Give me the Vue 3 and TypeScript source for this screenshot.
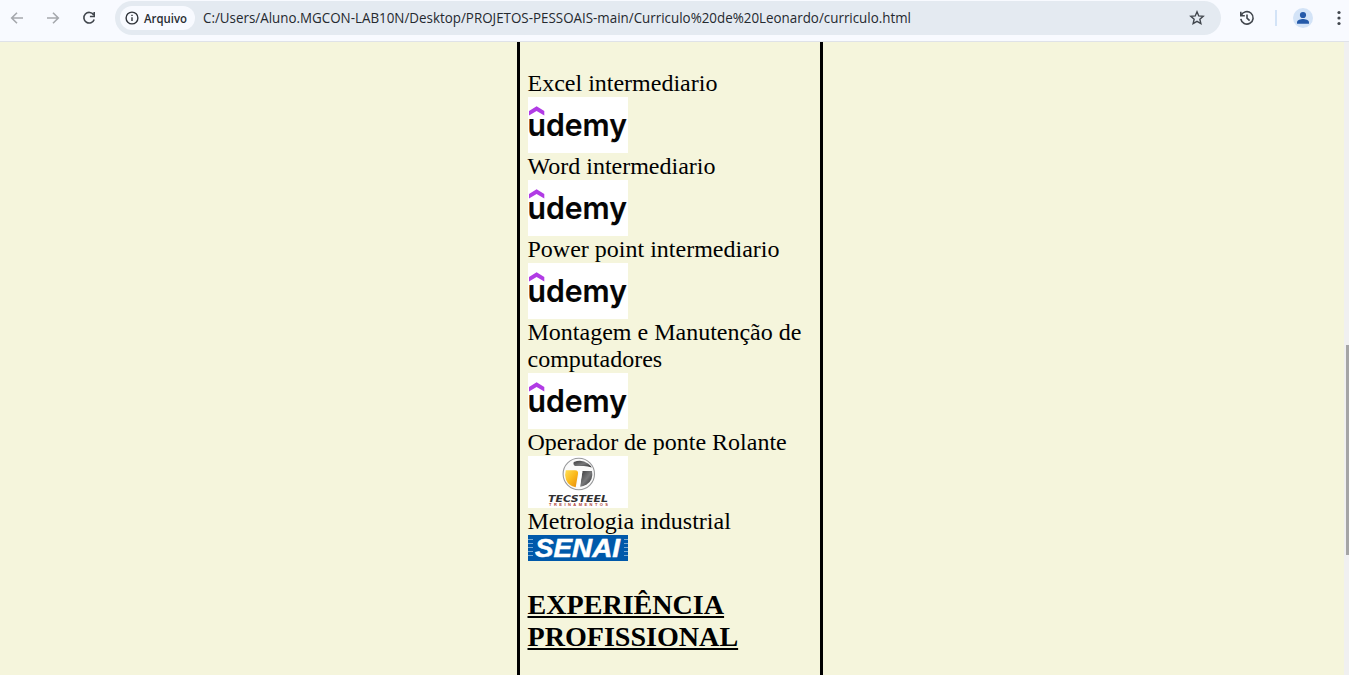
<script setup lang="ts">
type Logo = 'udemy' | 'tecsteel' | 'senai'
interface Course { name: string; logo: Logo }

const courses: Course[] = [
  { name: 'Excel intermediario', logo: 'udemy' },
  { name: 'Word intermediario', logo: 'udemy' },
  { name: 'Power point intermediario', logo: 'udemy' },
  { name: 'Montagem e Manutenção de computadores', logo: 'udemy' },
  { name: 'Operador de ponte Rolante', logo: 'tecsteel' },
  { name: 'Metrologia industrial', logo: 'senai' },
]
const address = 'C:/Users/Aluno.MGCON-LAB10N/Desktop/PROJETOS-PESSOAIS-main/Curriculo%20de%20Leonardo/curriculo.html'
</script>

<template>
  <div class="window">
    <header class="toolbar">
      <svg class="icon back" width="16" height="16" viewBox="0 0 16 16"><path d="M14 8H3M8 2.7 2.7 8 8 13.3" /></svg>
      <svg class="icon forward" width="16" height="16" viewBox="0 0 16 16"><path d="M2 8h11M8 2.7 13.3 8 8 13.3" /></svg>
      <svg class="icon reload" width="16" height="16" viewBox="0 0 16 16"><path d="M12.6 4.8A5.3 5.3 0 1 0 13.2 9.4M13.2 2v4.5H8.9" /></svg>
      <div class="omnibox">
        <div class="chip">
          <svg class="icon info" width="14" height="14" viewBox="0 0 14 14"><circle cx="7" cy="7" r="5.9" /><path d="M7 6.3v3.8M7 3.7v1.4" /></svg>
          <svg class="chip-label" width="46" height="24"><text x="0" y="16.5" textLength="43" lengthAdjust="spacingAndGlyphs">Arquivo</text></svg>
        </div>
        <svg class="address" width="712" height="28"><text x="0" y="19" textLength="708" lengthAdjust="spacingAndGlyphs">{{ address }}</text></svg>
        <svg class="icon star" width="16" height="16" viewBox="0 0 16 16"><path d="m8 1.8 1.75 4.1 4.45.4-3.35 2.95 1 4.35L8 11.3l-3.85 2.3 1-4.35L1.8 6.3l4.45-.4Z" /></svg>
      </div>
      <svg class="icon history" width="16" height="16" viewBox="0 0 16 16"><path d="M1.8 1.8v4h4M2.2 5.5A6.2 6.2 0 1 1 1.8 8.8M8 4.5V8.2l2.6 2.5" /></svg>
      <span class="divider" />
      <svg class="profile" width="20" height="20" viewBox="0 0 20 20"><circle cx="10" cy="10" r="10" fill="#d3e3f7" /><circle cx="10" cy="7" r="3.1" fill="#2459a9" /><path d="M4 15.8v-1.5c0-2.2 3.8-3.2 6-3.2s6 1 6 3.2v1.5Z" fill="#2459a9" /></svg>
      <svg class="menu" width="6" height="16" viewBox="0 0 6 16"><circle cx="3" cy="2.5" r="1.6" /><circle cx="3" cy="8" r="1.6" /><circle cx="3" cy="13.5" r="1.6" /></svg>
    </header>

    <div class="viewport">
      <main class="page">
        <section class="resume">
          <div v-for="course in courses" :key="course.name" class="course">
            <p>{{ course.name }}</p>
            <svg v-if="course.logo === 'udemy'" width="100" height="56" viewBox="0 0 100 56">
              <rect width="100" height="56" fill="#fff" />
              <path d="M1 14 8.6 9.2l7.7 4.8v4.5L8.6 13.9 1 18.5Z" fill="#b13be5" />
              <text class="udemy" x="-.5" y="39.4" textLength="99.5" lengthAdjust="spacingAndGlyphs">udemy</text>
            </svg>
            <svg v-else-if="course.logo === 'tecsteel'" width="100" height="52" viewBox="0 0 100 52">
              <defs>
                <linearGradient id="gold" x1="0" y1="0" x2="1" y2="1"><stop offset="0" stop-color="#ffdf55" /><stop offset=".5" stop-color="#fbb91c" /><stop offset="1" stop-color="#e58b0c" /></linearGradient>
                <linearGradient id="steel" x1="0" y1="0" x2="1" y2="1"><stop offset="0" stop-color="#3a3a3c" /><stop offset=".5" stop-color="#77787a" /><stop offset="1" stop-color="#29292b" /></linearGradient>
              </defs>
              <rect width="100" height="52" fill="#fff" />
              <circle cx="50.8" cy="18" r="15.7" fill="#fafafa" stroke="#98999b" stroke-width="1.1" />
              <path d="M37.8 14.2H47Q50.6 14.5 50 18L47.7 31.2Q40.5 29.8 38 23.7q-1.7-4.8-.2-9.5Z" fill="url(#gold)" />
              <path d="M45.8 6Q53.5 2.7 60 7.4q3 2.3 3.8 4.2-3.8-1.7-8-1.7H47Q44.7 8.8 45.8 6Z" fill="url(#steel)" />
              <path d="M54.4 14.9H64q1.8 8.9-5.4 13.6-3.3 2-6.4 2.3Z" fill="url(#steel)" />
              <path d="M53.3 15.2 50.4 31" fill="none" stroke="#fff" stroke-width="2.4" />
              <text class="tecsteel" x="20" y="45.5" textLength="60" lengthAdjust="spacingAndGlyphs">TECSTEEL</text>
              <text class="training" x="21" y="50.4" textLength="59">TREINAMENTOS</text>
            </svg>
            <svg v-else class="senai-logo" width="100" height="26" viewBox="0 0 100 26">
              <rect width="100" height="26" fill="#0059aa" />
              <path d="M0 4.5h5M0 8.5h5M0 12.5h5M0 16.5h5M0 20.5h5M96 4.5h4M96 8.5h4M96 12.5h4M96 16.5h4M96 20.5h4" stroke="#77a9d5" stroke-width="1" />
              <text class="senai" x="7" y="22" textLength="85" lengthAdjust="spacingAndGlyphs">SENAI</text>
            </svg>
          </div>
          <h3>EXPERIÊNCIA PROFISSIONAL</h3>
        </section>
      </main>
      <div class="scrollbar"><div class="thumb" /></div>
    </div>
  </div>
</template>

<style>
body { margin: 0; overflow: hidden; }
</style>

<style scoped>
.window { height: 675px; display: flex; flex-direction: column; overflow: hidden; }
svg { display: block; flex: none; overflow: visible; }
.toolbar { box-sizing: border-box; height: 42px; flex: none; display: flex; align-items: center; padding: 0 0 5px 9px; background: #f8faff; border-bottom: 1px solid #dfe2e8; }
.icon { fill: none; stroke: #41464d; stroke-width: 1.6; }
.back, .forward { stroke: #a5a8ad; }
.forward { margin-left: 20px; }
.reload { margin-left: 20px; }
.omnibox { width: 1106px; height: 34px; margin-left: 18px; border-radius: 17px; background: #e4eaf1; display: flex; align-items: center; flex: none; }
.chip { box-sizing: border-box; width: 75px; height: 24px; margin-left: 5px; padding-left: 5px; border-radius: 12px; background: #f8faff; display: flex; align-items: center; gap: 5px; }
.info { stroke: #30343a; stroke-width: 1.4; }
.chip-label text { font: 600 12.5px "Open Sans", "Noto Sans", sans-serif; fill: #282d33; }
.address { margin-left: 8px; }
.address text { font: 14px "Open Sans", "Noto Sans", sans-serif; fill: #24292f; }
.star { margin-left: 274px; stroke-width: 1.4; }
.history { margin-left: 18px; }
.divider { width: 2px; height: 16px; margin-left: 20px; background: #d3e3f7; }
.profile { margin-left: 16px; }
.menu { margin-left: 23px; fill: #41464d; }
.viewport { flex: 1; min-height: 0; display: flex; }
.page { flex: 1; background: #f5f5dc; overflow: hidden; }
.resume { box-sizing: border-box; width: 306px; height: 100%; margin-left: 517px; padding: 28px 8px 0 7.5px; border: solid #000; border-width: 0 3px; font: 24px/27px "Liberation Serif", "Times New Roman", serif; color: #000; }
.course svg { margin-left: .5px; }
p { margin: 0; }
h3 { margin: 28px 0 0; font-size: 28.08px; line-height: 32px; text-decoration: underline; }
.udemy { font: 600 31.5px Inter, sans-serif; fill: #050505; stroke: #050505; stroke-width: .15; }
.tecsteel { font: italic 700 9px "DejaVu Sans", sans-serif; fill: #303032; }
.training { font: 700 4px "Liberation Sans", sans-serif; fill: #ae3e30; }
.senai { font: italic 700 25.5px/1 "Liberation Sans", Arial, sans-serif; fill: #fff; stroke: #fff; stroke-width: .5; }
.scrollbar { width: 5px; background: #f0f0f0; display: flex; justify-content: flex-end; }
.thumb { width: 3px; height: 210px; margin-top: 303px; background: #a5a5a5; }
</style>
